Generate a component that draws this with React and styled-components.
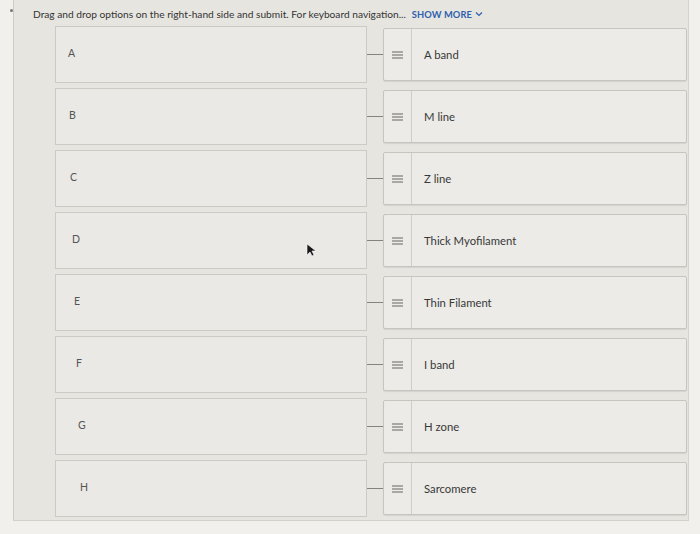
import React from "react";
import styled, { createGlobalStyle } from "styled-components";

const GlobalStyle = createGlobalStyle`
  html, body {
    margin: 0;
    padding: 0;
    background: #f1f0ed;
  }
  body {
    font-family: Lato, "Open Sans", sans-serif;
  }
`;

const Page = styled.div`
  width: 700px;
  height: 534px;
  overflow: hidden;
  position: relative;
`;

const Panel = styled.div`
  margin-left: 13px;
  width: 676px;
  height: 521px;
  box-sizing: border-box;
  background: #e7e5e0;
  border-left: 1px solid #cfccc6;
  border-bottom: 1px solid #d3d0ca;
  border-right: 1px solid #d6d3ce;
  position: relative;
`;

const Bullet = styled.span`
  position: absolute;
  left: -4px;
  top: 9px;
  width: 3px;
  height: 3px;
  border-radius: 50%;
  background: #777;
`;

const Header = styled.div`
  display: flex;
  align-items: center;
  gap: 6px;
  padding: 7px 0 0 19px;
  height: 14px;
  font-size: 10.2px;
  color: #333;
  white-space: nowrap;
`;

const ShowMore = styled.span`
  display: inline-flex;
  align-items: center;
  gap: 3px;
  color: #2f5fae;
  font-size: 9.3px;
  font-weight: 700;
  letter-spacing: 0.1px;
`;

const List = styled.div`
  display: flex;
  flex-direction: column;
  gap: 5px;
  padding: 5px 0 0 41px;
`;

const Row = styled.div`
  display: grid;
  grid-template-columns: 312px 16px 304px;
  height: 57px;
  align-items: stretch;
`;

const DropBox = styled.div`
  box-sizing: border-box;
  border: 1px solid #cdcac4;
  background: #ebe9e5;
  display: flex;
  align-items: center;
  padding-left: ${(p) => p.$indent}px;
  padding-bottom: 4px;
  font-size: 10.5px;
  color: #555;
`;

const Connector = styled.div`
  display: flex;
  align-items: center;
  &::before {
    content: "";
    display: block;
    width: 100%;
    height: 1px;
    background: #85837e;
  }
`;

const Option = styled.div`
  box-sizing: border-box;
  border: 1px solid #c8c5bf;
  border-radius: 2px;
  background: #ecebe7;
  box-shadow: 0 1px 1px rgba(0, 0, 0, 0.08);
  display: flex;
  margin: ${(p) => p.$inset}px 0;
`;

const Handle = styled.div`
  width: 27px;
  flex-shrink: 0;
  border-right: 1px solid #d0cdc7;
  display: flex;
  align-items: center;
  justify-content: center;
  color: #666;
`;

const Label = styled.div`
  display: flex;
  align-items: center;
  padding-left: 12px;
  font-size: 11.3px;
  color: #383838;
`;

const Cursor = styled.svg`
  position: absolute;
  left: 292px;
  top: 243px;
`;

const rows = [
  { key: "A", option: "A band", indent: 12 },
  { key: "B", option: "M line", indent: 13 },
  { key: "C", option: "Z line", indent: 14 },
  { key: "D", option: "Thick Myofilament", indent: 16 },
  { key: "E", option: "Thin Filament", indent: 18 },
  { key: "F", option: "I band", indent: 20 },
  { key: "G", option: "H zone", indent: 22 },
  { key: "H", option: "Sarcomere", indent: 24 },
];

const GripIcon = () => (
  <svg width="11" height="8" viewBox="0 0 11 8">
    <path d="M0 1h11M0 4h11M0 7h11" stroke="currentColor" strokeWidth="1.1" />
  </svg>
);

const App = () => (
  <Page>
    <GlobalStyle />
    <Panel>
      <Bullet />
      <Header>
        <span>
          Drag and drop options on the right-hand side and submit. For keyboard
          navigation...
        </span>
        <ShowMore>
          SHOW MORE
          <svg width="8" height="6" viewBox="0 0 8 6">
            <path d="M1 1.5l3 3 3-3" fill="none" stroke="currentColor" strokeWidth="1.2" />
          </svg>
        </ShowMore>
      </Header>
      <List>
        {rows.map((r) => (
          <Row key={r.key}>
            <DropBox $indent={r.indent}>{r.key}</DropBox>
            <Connector />
            <Option $inset={2}>
              <Handle>
                <GripIcon />
              </Handle>
              <Label>{r.option}</Label>
            </Option>
          </Row>
        ))}
      </List>
      <Cursor width="10" height="14" viewBox="0 0 10 14">
        <path d="M1 1l0 11 3-3 2 4 2-1-2-4 4 0z" fill="#1a1a1a" stroke="#fff" strokeWidth="0.6" />
      </Cursor>
    </Panel>
  </Page>
);

export default App;
